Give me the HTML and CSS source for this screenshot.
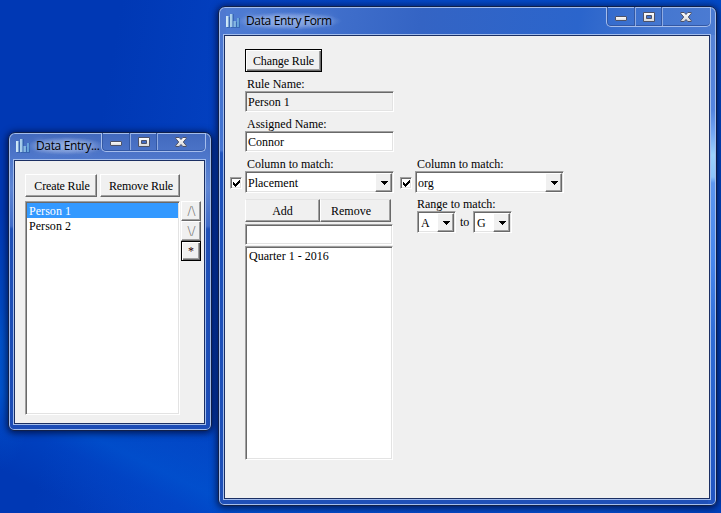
FILE: index.html
```html
<!DOCTYPE html>
<html lang="en">
<head>
<meta charset="utf-8">
<title>Data Entry Form</title>
<link rel="stylesheet" href="styles.css">
</head>
<body>
<svg class="defs" width="0" height="0" aria-hidden="true">
  <defs>
    <linearGradient id="bar" x1="0" y1="0" x2="1" y2="0"><stop offset="0" stop-color="#d5ecf8"/><stop offset="1" stop-color="#5c9cd6"/></linearGradient>
    <linearGradient id="glyph" x1="0" y1="0" x2="0" y2="1"><stop offset="0" stop-color="#fff"/><stop offset="1" stop-color="#d8d8d8"/></linearGradient>
    <symbol id="app" viewBox="0 0 14 15">
      <path d="M1 3h3v11H1zM5 0h3v14H5zM8 8h3v6H8zM11 4h3v10h-3z" fill="#24549a" opacity=".5"/>
      <path d="M0 2h2.500v11H0zM4 0h2.500v13H4zM7.500 7H10v6H7.500zM11 4h2v9h-2z" fill="url(#bar)"/>
    </symbol>
    <symbol id="min" viewBox="0 0 12 5"><rect x=".5" y=".5" width="11" height="4" rx=".5" fill="url(#glyph)" stroke="#4d5268"/></symbol>
    <symbol id="max" viewBox="0 0 12 10"><path d="M.5.500h11v9H.5zM3.500 3.500v3h5v-3z" fill="url(#glyph)" fill-rule="evenodd" stroke="#4d5268"/></symbol>
    <symbol id="close" viewBox="0 0 12 10"><path d="M.8.500h3.400L6 2.500 7.800.500h3.400v1L8.300 5l2.900 3.500v1H7.800L6 7.500 4.200 9.500H.8v-1L3.700 5 .8 1.500z" fill="url(#glyph)" stroke="#4d5268"/></symbol>
    <symbol id="arrow" viewBox="0 0 7 4"><path d="M0 0h7v1H6v1H5v1H4v1H3V3H2V2H1V1H0z" fill="#000"/></symbol>
    <symbol id="tick" viewBox="0 0 7 7"><path d="M0 2h1v1h1v1h1V3h1V2h1V1h1V0h1v3H6v1H5v1H4v1H3v1H2V6H1V5H0z" fill="#000"/></symbol>
  </defs>
</svg>
<main class="desktop">
  <section class="window rules">
    <header class="titlebar">
      <svg class="appicon"><use href="#app"/></svg>
      <h1 class="title">Data Entry...</h1>
      <div class="controls">
        <span class="ctl"><svg class="i-min"><use href="#min"/></svg></span>
        <span class="ctl"><svg class="i-max"><use href="#max"/></svg></span>
        <span class="ctl"><svg class="i-max"><use href="#close"/></svg></span>
      </div>
    </header>
    <div class="client">
      <div class="toolbar">
        <button class="btn create">Create Rule</button>
        <button class="btn remove">Remove Rule</button>
      </div>
      <div class="listrow">
        <ul class="sunken list">
          <li class="selected">Person 1</li>
          <li>Person 2</li>
        </ul>
        <div class="side">
          <button class="btn dim">/\</button>
          <button class="btn dim">\/</button>
          <button class="btn default star">*</button>
        </div>
      </div>
    </div>
  </section>

  <section class="window form">
    <header class="titlebar">
      <svg class="appicon"><use href="#app"/></svg>
      <h1 class="title">Data Entry Form</h1>
      <div class="controls">
        <span class="ctl"><svg class="i-min"><use href="#min"/></svg></span>
        <span class="ctl"><svg class="i-max"><use href="#max"/></svg></span>
        <span class="ctl"><svg class="i-max"><use href="#close"/></svg></span>
      </div>
    </header>
    <div class="client">
      <button class="btn default change">Change Rule</button>
      <div class="label">Rule Name:</div>
      <div class="sunken field readonly">Person 1</div>
      <div class="label">Assigned Name:</div>
      <div class="sunken field">Connor</div>
      <div class="columns">
        <div class="column">
          <div class="label">Column to match:</div>
          <div class="matchrow">
            <span class="sunken check"><svg><use href="#tick"/></svg></span>
            <div class="sunken combo">Placement<span class="btn drop"><svg><use href="#arrow"/></svg></span></div>
          </div>
          <div class="pair">
            <button class="btn add">Add</button>
            <button class="btn del">Remove</button>
          </div>
          <div class="sunken entry"></div>
          <ul class="sunken values"><li>Quarter 1 - 2016</li></ul>
        </div>
        <div class="column">
          <div class="label">Column to match:</div>
          <div class="matchrow">
            <span class="sunken check"><svg><use href="#tick"/></svg></span>
            <div class="sunken combo">org<span class="btn drop"><svg><use href="#arrow"/></svg></span></div>
          </div>
          <div class="label range">Range to match:</div>
          <div class="rangerow">
            <div class="sunken combo small">A<span class="btn drop"><svg><use href="#arrow"/></svg></span></div>
            <span class="to">to</span>
            <div class="sunken combo small">G<span class="btn drop"><svg><use href="#arrow"/></svg></span></div>
          </div>
        </div>
      </div>
    </div>
  </section>
</main>
</body>
</html>
```
FILE: styles.css
```css
* { box-sizing: border-box; }
body { margin: 0; font: 12px/15px "Liberation Serif", "Times New Roman", serif; color: #000; }
.defs { position: absolute; }
svg { display: block; }
ul { list-style: none; margin: 0; padding: 0; }

.desktop {
  position: relative; width: 721px; height: 513px; overflow: hidden;
  background:
    radial-gradient(ellipse 40px 130px at 0 340px, rgba(0, 110, 225, .4), transparent),
    linear-gradient(206deg, transparent 76%, rgba(0, 85, 210, .65) 86%, rgba(0, 75, 205, .45) 89%, transparent 95%),
    linear-gradient(100deg, #0038b4 0%, #0038b4 15%, #0340c0 30%, #0449c8 55%, #044cca 85%, #0040bc 100%);
}

.window {
  position: absolute; display: flex; flex-direction: column;
  border: 1px solid #10204a; border-radius: 7px 7px 6px 6px;
  padding: 0 5px 5px 4px;
  box-shadow: inset 0 0 0 1px #a3bdec, 0 1px 7px 1px rgba(0, 0, 30, .7);
}
.rules {
  left: 8px; top: 132px; width: 204px; height: 299px;
  background: linear-gradient(180deg, #4269bd 0, #4f78cc 27px, #5f86d4 55px, #416dca 93px, #1f50b8 96px, #1c4cb6 100%);
}
.form {
  left: 218px; top: 6px; width: 499px; height: 500px;
  background:
    linear-gradient(180deg, #5682d6 0, #5485e0 75px, #74a8f4 98px, #9cd2fc 120px, #8cc4fa 142px, #5c96f0 148px, #4585ec 230px, #2f6cd6 300px, #2054c0 100%) right 0 top 28px / 8px 472px no-repeat,
    linear-gradient(180deg, #5079d0 0, #4374d2 120px, #4876d4 143px, #1f52bc 146px, #1f50b8 100%) left top / 7px 493px no-repeat,
    linear-gradient(#1f50b8, #1f50b8) left bottom / 100% 8px no-repeat,
    linear-gradient(100deg, #507dd4 0, #3464c4 35%, #2b65cc 62%, #4577d0 76%, #5682d6 100%);
}

.titlebar { display: flex; flex: none; height: 26px; padding-left: 3px; align-items: flex-start; }
.form .titlebar { height: 27px; }
.appicon { width: 14px; height: 15px; margin-top: 6px; flex: none; }
.form .appicon { margin-top: 7px; }
.title {
  margin: 4px 0 0 -4px; padding: 0 10px; white-space: nowrap;
  font: 12px/18px "Open Sans", "Noto Sans", sans-serif; letter-spacing: -.36px;
  background: radial-gradient(ellipse closest-side, rgba(190, 210, 245, .5), rgba(190, 210, 245, .35) 60%, transparent);
  text-shadow: 0 0 8px rgba(220, 232, 255, .6), 0 0 5px rgba(220, 232, 255, .4);
}
.rules .title { width: 79px; padding-right: 0; flex: none; }
.form .title { margin-top: 5px; }
.controls {
  display: flex; margin-left: auto; width: 105px; height: 20px; flex: none;
  border: 1px solid #a5bdec; border-top: 0; border-radius: 0 0 5px 5px;
  box-shadow: inset 1px 0 #3358a4, inset 0 -1px #3358a4;
}
.rules .controls { height: 19px; margin-left: -4px; }
.ctl { display: flex; align-items: center; justify-content: center; width: 27px; height: 19px; border-left: 1px solid #8fabe2; box-shadow: -1px 0 #3358a4; }
.rules .ctl { height: 17px; }
.ctl:first-child { width: 28px; border: 0; box-shadow: none; }
.ctl:last-child { width: 48px; padding-right: 1px; }
.i-min { width: 12px; height: 5px; margin-top: 4px; }
.i-max { width: 12px; height: 10px; }

.client {
  flex: 1; background: #f0f0f0; border: 1px solid #1b2f63;
  box-shadow: 0 0 0 1px #a3bdec; margin: 1px;
}
.rules .client { padding: 13px 0 0 10px; }
.form .client { padding: 13px 0 0 20px; }

.btn {
  display: block; margin: 0; padding: 0; height: 23px; font: inherit; color: #000; text-align: center;
  background: #f0f0f0; border: 1px solid; border-color: #fff #696969 #696969 #fff; border-radius: 0;
  box-shadow: inset -1px -1px #a0a0a0;
}
.btn.default { border-color: #000; box-shadow: inset 1px 1px #fff, inset -1px -1px #696969, inset -2px -2px #a0a0a0; }
.sunken {
  background: #fff; border: 1px solid; border-color: #a0a0a0 #fff #fff #a0a0a0;
  box-shadow: inset 1px 1px #696969, inset -1px -1px #e3e3e3;
}
.readonly { background: #f0f0f0; }

.toolbar { display: flex; gap: 3px; }
.toolbar .btn { padding-top: 1px; letter-spacing: -.15px; }
.create { width: 72px; padding-left: 2px; }
.remove { width: 80px; padding-left: 2px; }
.listrow { display: flex; gap: 1px; margin-top: 4px; }
.list { width: 155px; height: 214px; padding: 1px; }
.list li { height: 15px; padding: 1px 0 0 2px; letter-spacing: .05px; }
.list .selected { background: #3399ff; color: #fff; }
.side .btn { width: 20px; height: 20px; }
.side .dim { color: #707070; font-size: 14px; padding-left: 1px; }
.side .star { color: #300; }

.change { width: 77px; padding: 1px 0 0; letter-spacing: -.1px; }
.label { height: 19px; padding: 5px 0 0 2px; white-space: nowrap; }
.field { width: 149px; height: 21px; padding: 3px 0 0 2px; line-height: 15px; }
.columns { display: flex; gap: 22px; }
.column { width: 148px; }
.matchrow { display: flex; align-items: center; margin-left: -15px; gap: 3px; width: 164px; }
.check { width: 12px; height: 12px; flex: none; padding: 2px; margin-top: 2px; }
.check svg { width: 7px; height: 7px; }
.combo { position: relative; flex: none; width: 149px; height: 22px; padding: 4px 0 0 2px; line-height: 15px; }
.small { width: 39px; padding-left: 3px; }
.drop { position: absolute; right: 1px; top: 1px; width: 17px; height: 19px; display: flex; align-items: center; justify-content: center; padding: 1px 0 0 1px; }
.drop svg { width: 7px; height: 4px; }
.pair { display: flex; margin-top: 6px; }
.pair .btn { padding-top: 2px; border-top-color: #e3e3e3; }
.add { width: 75px; }
.pair .del { width: 71px; padding-right: 9px; }
.entry { width: 148px; height: 21px; margin-top: 2px; }
.values { width: 148px; height: 214px; margin-top: 1px; padding: 2px 0 0 3px; }
.range { padding-top: 4px; height: 18px; }
.rangerow { display: flex; margin-left: 2px; }
.to { width: 17px; padding: 4px 0 0 4px; }
```
